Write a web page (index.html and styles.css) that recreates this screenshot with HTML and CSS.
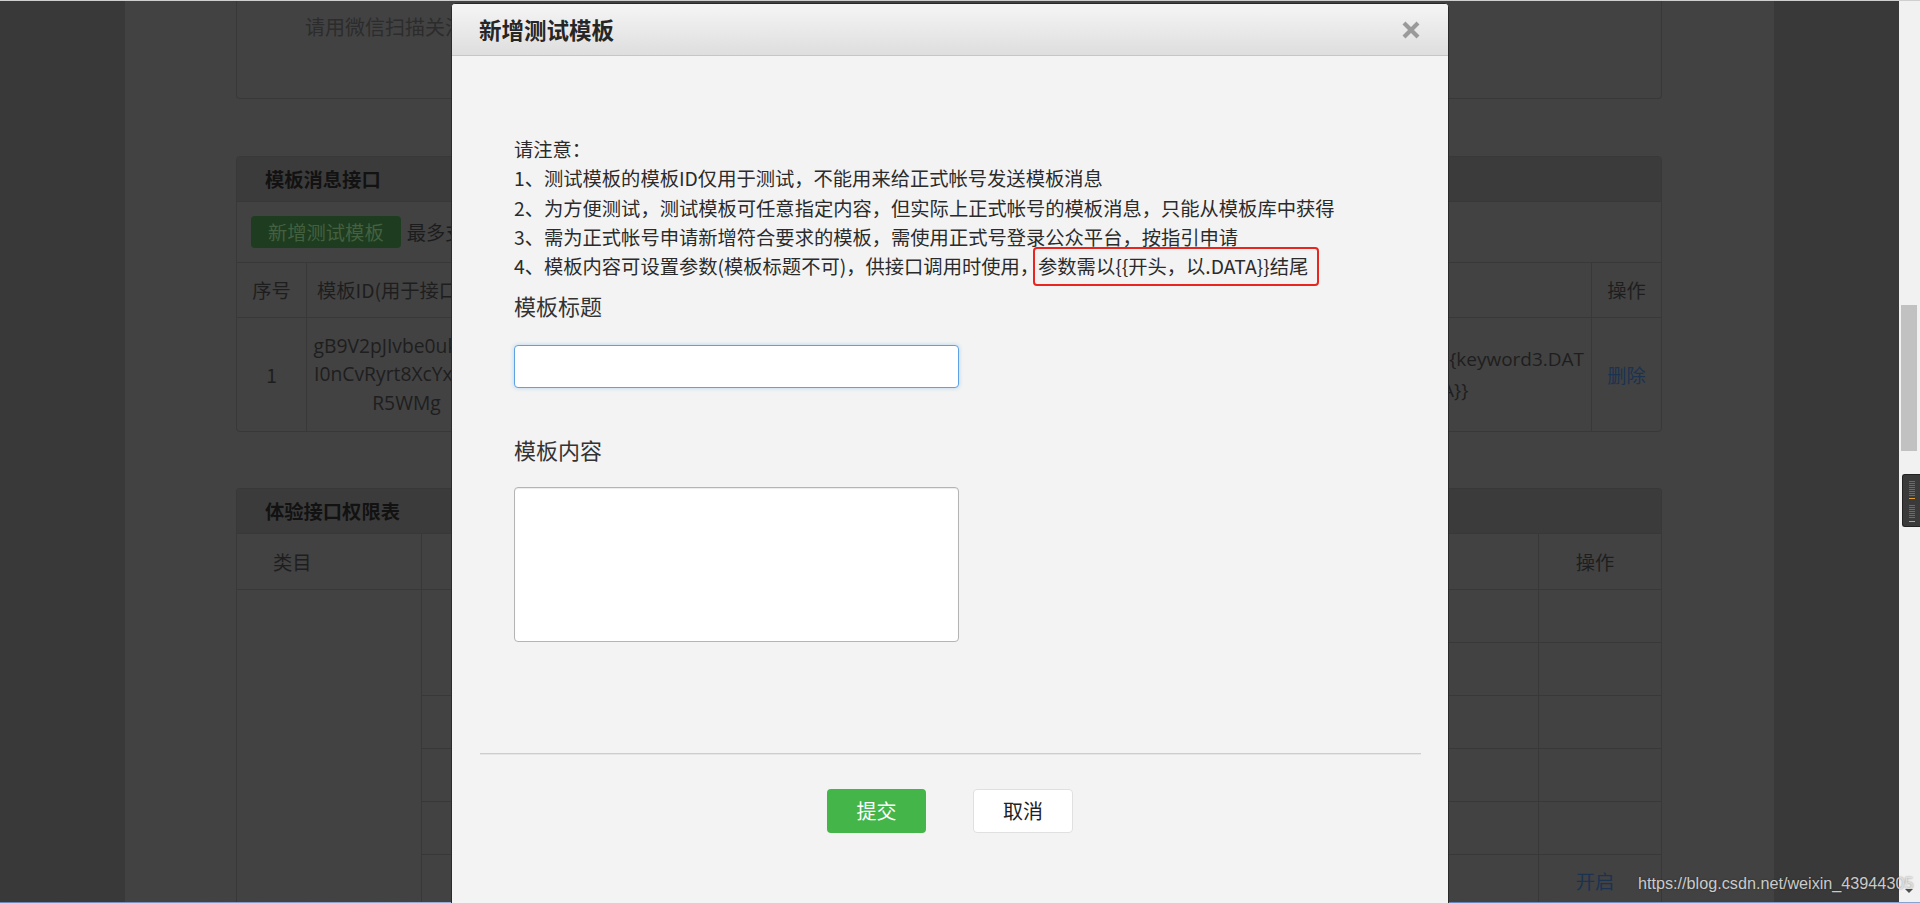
FILE: index.html
```html
<!DOCTYPE html>
<html lang="zh-CN">
<head>
<meta charset="utf-8">
<title>新增测试模板</title>
<link rel="stylesheet" href="styles.css">
</head>
<body>
<div class="topline"></div>
<div class="screen">
  <div class="viewport">
    <div class="main">
      <section class="panel panel-top">
        <p class="scan-tip">请用微信扫描关注测试公众号</p>
      </section>

      <section class="panel panel-tpl">
        <div class="panel-head">模板消息接口</div>
        <div class="tool-row">
          <span class="btn-add">新增测试模板</span>
          <span class="tool-tip">最多支持10个模板</span>
        </div>
        <div class="grid tpl-grid">
          <div class="cell head center">序号</div>
          <div class="cell head left">模板ID(用于接口调用)</div>
          <div class="cell head center">模板标题</div>
          <div class="cell head center">模板内容</div>
          <div class="cell head center last">操作</div>

          <div class="cell body center">1</div>
          <div class="cell body center id-cell">gB9V2pJIvbe0uk4s7a<br>I0nCvRyrt8XcYxd2Hs<br>R5WMg</div>
          <div class="cell body center">测试模板</div>
          <div class="cell body content-cell"><div class="kw">{{keyword3.DAT<br>A}}</div></div>
          <div class="cell body center last link">删除</div>
        </div>
      </section>

      <section class="panel panel-perm">
        <div class="panel-head">体验接口权限表</div>
        <div class="grid perm-grid">
          <div class="cell head left cat">类目</div>
          <div class="cell head center">功能</div>
          <div class="cell head center">接口</div>
          <div class="cell head center last op">操作</div>

          <div class="cell span6"></div>
          <div class="cell span2"></div>
          <div class="cell"></div>
          <div class="cell last"></div>
          <div class="cell"></div>
          <div class="cell last"></div>
          <div class="cell"></div>
          <div class="cell"></div>
          <div class="cell last"></div>
          <div class="cell"></div>
          <div class="cell"></div>
          <div class="cell last"></div>
          <div class="cell"></div>
          <div class="cell"></div>
          <div class="cell last"></div>
          <div class="cell"></div>
          <div class="cell"></div>
          <div class="cell last center link op">开启</div>
        </div>
      </section>
    </div>
  </div>
  <div class="scrollbar">
    <div class="thumb"></div>
    <div class="arrow-down"></div>
  </div>
</div>
<div class="taskbar"></div>

<div class="modal">
  <div class="modal-head">
    <span class="modal-title">新增测试模板</span>
    <svg class="modal-close" width="20" height="20" viewBox="0 0 20 20"><path d="M3 3 L17 17 M17 3 L3 17" stroke="#9a9a9a" stroke-width="4.2" stroke-linecap="butt"/></svg>
  </div>
  <div class="modal-body">
    <div class="notes">
      <div>请注意：</div>
      <div>1、测试模板的模板ID仅用于测试，不能用来给正式帐号发送模板消息</div>
      <div>2、为方便测试，测试模板可任意指定内容，但实际上正式帐号的模板消息，只能从模板库中获得</div>
      <div>3、需为正式帐号申请新增符合要求的模板，需使用正式号登录公众平台，按指引申请</div>
      <div>4、模板内容可设置参数(模板标题不可)，供接口调用时使用，<span class="mark">参数需以{{开头，以.DATA}}结尾</span></div>
    </div>
    <div class="field-label">模板标题</div>
    <input class="field-input" type="text">
    <div class="field-label second">模板内容</div>
    <textarea class="field-area"></textarea>
  </div>
  <div class="modal-divider"></div>
  <div class="modal-foot">
    <span class="btn btn-ok">提交</span>
    <span class="btn btn-cancel">取消</span>
  </div>
</div>

<div class="watermark">https://blog.csdn.net/weixin_43944305</div>

<div class="meter">
  <svg width="18" height="53" viewBox="0 0 18 53">
    <g stroke="#6a6a6a" stroke-width="1">
      <path d="M6 6.5h6M6 8.5h6M6 10.5h6M6 12.5h6M6 14.5h6M6 16.5h6M6 18.5h6M6 20.5h6"/>
      <path d="M6 30.5h6M6 32.5h6M6 34.5h6M6 36.5h6M6 38.5h6M6 40.5h6M6 42.5h6"/>
    </g>
    <path d="M6 23.5h6" stroke="#e0a030" stroke-width="1"/>
    <path d="M6 46.5h6" stroke="#7ed321" stroke-width="1"/>
  </svg>
</div>
</body>
</html>
```

FILE: styles.css
```css
* {
  box-sizing: border-box;
}

html, body {
  margin: 0;
  padding: 0;
}

body {
  width: 1920px;
  height: 903px;
  overflow: hidden;
  position: relative;
  background: #393939;
  font-family: "Noto Sans CJK SC", "Open Sans", sans-serif;
  color: #1e1e1e;
}

.topline {
  height: 1px;
  background: #cfcfcf;
}

.screen {
  display: flex;
  height: 901px;
}

.viewport {
  flex: 1;
  padding: 0 125px;
  background: #393939;
  overflow: hidden;
}

.main {
  height: 100%;
  background: #424242;
  padding: 0 112px 0 111px;
  overflow: hidden;
}

.panel {
  background: #424242;
  border: 1px solid #383838;
  border-radius: 4px;
}

.panel-top {
  height: 98px;
  border-top: none;
  border-radius: 0 0 4px 4px;
}

.scan-tip {
  margin: 0;
  padding: 11px 0 0 68px;
  font-size: 20px;
  line-height: 30px;
  color: #2c2c2c;
}

.panel-tpl {
  margin-top: 57px;
}

.panel-perm {
  margin-top: 56px;
  border-bottom: none;
  border-radius: 4px 4px 0 0;
}

.panel-head {
  height: 45px;
  line-height: 44px;
  padding-left: 28px;
  background: #3b3b3b;
  border-bottom: 1px solid #383838;
  font-size: 19.3px;
  font-weight: bold;
  color: #121212;
  border-radius: 4px 4px 0 0;
}

.tool-row {
  height: 61px;
  display: flex;
  align-items: center;
  padding-left: 14px;
  border-bottom: 1px solid #383838;
}

.btn-add {
  height: 32px;
  line-height: 32px;
  padding: 0 17px;
  border-radius: 4px;
  background: #1e3c1f;
  color: #44613f;
  font-size: 19.3px;
}

.tool-tip {
  margin-left: 6px;
  font-size: 19.3px;
  color: #1c1c1c;
}

.grid {
  display: grid;
  font-size: 19.3px;
  color: #1e1e1e;
}

.tpl-grid {
  grid-template-columns: 70px 200px 293px 792px 69px;
  grid-template-rows: 55px 113px;
}

.perm-grid {
  grid-template-columns: 185px 278px 839px 122px;
  grid-template-rows: 56px repeat(6, 53px);
}

.cell {
  border-right: 1px solid #383838;
  border-bottom: 1px solid #383838;
  display: flex;
  align-items: center;
  overflow: hidden;
}

.tpl-grid .body {
  border-bottom: none;
}

.cell.last {
  border-right: none;
}

.cell.center {
  justify-content: center;
  text-align: center;
}

.cell.left {
  padding-left: 10px;
}

.cell.cat {
  padding-left: 36px;
}

.cell.op {
  padding-right: 10px;
}

.id-cell {
  line-height: 28.5px;
  white-space: nowrap;
  font-family: "Open Sans", "Noto Sans CJK SC", sans-serif;
}

.content-cell {
  justify-content: flex-end;
  padding-right: 8px;
}

.kw {
  width: 141px;
  line-height: 31px;
  white-space: nowrap;
  font-family: "Open Sans", "Noto Sans CJK SC", sans-serif;
  font-size: 19px;
}

.link {
  color: #1b3250;
}

.span6 {
  grid-row: span 6;
}

.span2 {
  grid-row: span 2;
}

.scrollbar {
  width: 21px;
  background: #f1f1f1;
  position: relative;
}

.thumb {
  margin: 304px 0 0 2px;
  width: 16px;
  height: 146px;
  background: #c1c1c1;
}

.arrow-down {
  position: absolute;
  left: 6px;
  bottom: 9px;
  width: 0;
  height: 0;
  border-left: 4px solid transparent;
  border-right: 4px solid transparent;
  border-top: 4px solid #505050;
}

.taskbar {
  height: 1px;
  background: linear-gradient(90deg, #6f86b8, #a9b6d8 30%, #8e6f6a 50%, #5c7fb5 70%, #8aa2d0);
}

/* Modal */
.modal {
  position: absolute;
  left: 451px;
  top: 3px;
  width: 998px;
  height: 920px;
  background: #f3f3f3;
  border: 1px solid #2a2a2a;
  border-radius: 4px 4px 0 0;
  color: #2b2b2b;
}

.modal-head {
  height: 52px;
  display: flex;
  align-items: center;
  justify-content: space-between;
  padding: 0 27px 0 27px;
  border-bottom: 1px solid #c6c6c6;
  background: linear-gradient(#f5f5f5, #dedede);
  border-radius: 3px 3px 0 0;
}

.modal-title {
  font-size: 22.5px;
  font-weight: bold;
  color: #262626;
  line-height: 51px;
}

.modal-close {
  display: block;
}

.modal-body {
  padding: 79px 0 0 62px;
}

.notes {
  font-size: 19.3px;
  line-height: 29.3px;
  color: #2b2b2b;
}

.mark {
  border: 2px solid #e8251f;
  border-radius: 4px;
  padding: 3px 9px 4px 3px;
  margin-left: -6px;
}

.field-label {
  margin-top: 9px;
  font-size: 22px;
  line-height: 30px;
  color: #333;
}

.field-label.second {
  margin-top: 46px;
}

.field-input {
  display: block;
  margin: 25px 0 0 0;
  width: 445px;
  height: 43px;
  border: 1px solid #5ea2e4;
  border-radius: 4px;
  background: #fff;
  box-shadow: 0 0 4px rgba(102, 175, 233, 0.45);
  outline: none;
  padding: 0;
}

.field-area {
  display: block;
  margin: 23px 0 0 0;
  width: 445px;
  height: 155px;
  border: 1px solid #b4b4b4;
  border-radius: 4px;
  background: #fff;
  box-shadow: inset 0 1px 1px rgba(0, 0, 0, 0.08);
  resize: none;
  outline: none;
  padding: 0;
}

.modal-divider {
  margin: 111px 27px 0 28px;
  height: 2px;
  background: #cdcdcd;
  border-bottom: 1px solid #e6e6e6;
}

.modal-foot {
  margin-top: 34px;
  display: flex;
  justify-content: center;
  gap: 47px;
}

.btn {
  display: block;
  height: 44px;
  line-height: 44px;
  width: 99px;
  text-align: center;
  border-radius: 4px;
  font-size: 20px;
}

.btn-ok {
  background: #44b549;
  color: #fff;
}

.btn-cancel {
  width: 100px;
  background: #fff;
  border: 1px solid #e0e0e0;
  line-height: 42px;
  color: #222;
}

.watermark {
  position: absolute;
  left: 1638px;
  top: 872px;
  font-family: "Liberation Sans", Arial, sans-serif;
  font-size: 16.2px;
  line-height: 22px;
  color: rgba(232, 232, 232, 0.85);
  text-shadow: 0 0 2px rgba(0, 0, 0, 0.45);
  white-space: nowrap;
}

.meter {
  position: absolute;
  left: 1902px;
  top: 474px;
  width: 18px;
  height: 53px;
  background: #3a3a3a;
  border: 1px solid #222;
  border-right: none;
  border-radius: 3px 0 0 3px;
  overflow: hidden;
}

.meter svg {
  display: block;
}
```
